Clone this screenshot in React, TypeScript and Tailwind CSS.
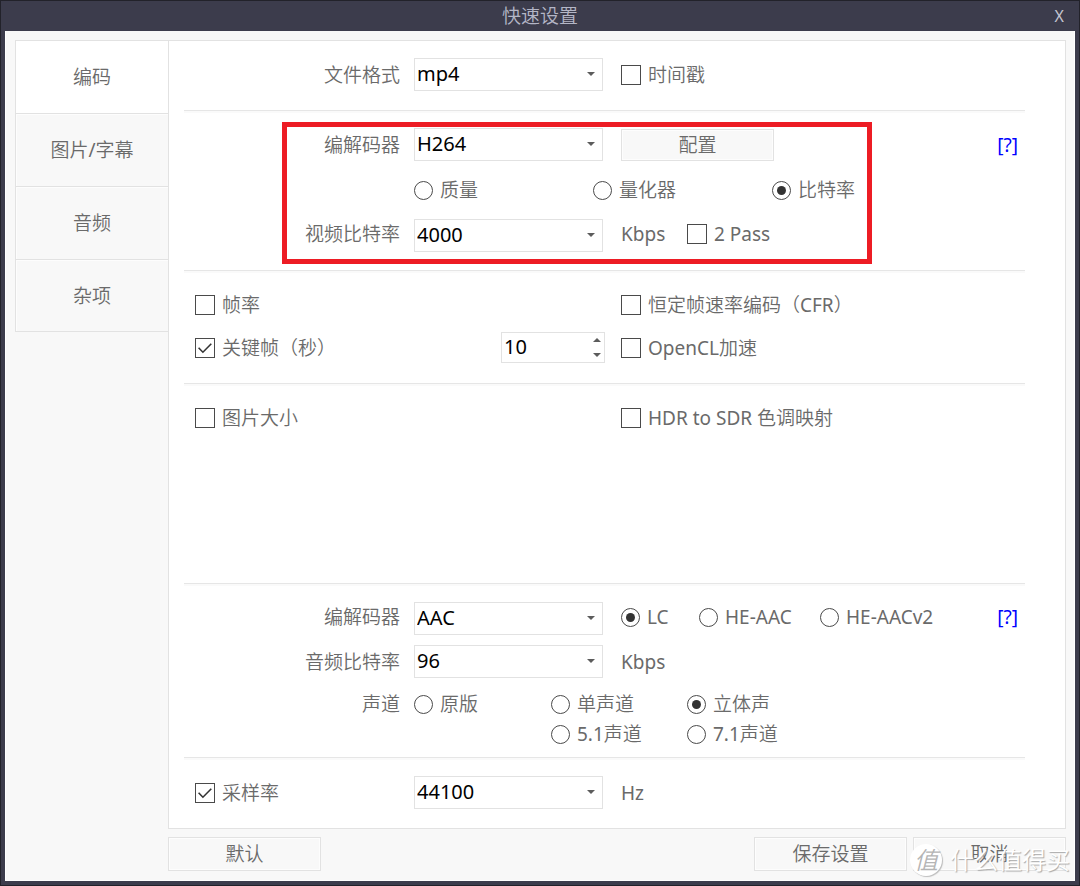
import { useState } from 'react';
import type { ReactNode } from 'react';
import clsx from 'clsx';

const TABS = ['编码', '图片/字幕', '音频', '杂项'];
const VIDEO_MODES = ['质量', '量化器', '比特率'];
const AAC_PROFILES = ['LC', 'HE-AAC', 'HE-AACv2'];

interface SelectBoxProps {
  id: string;
  options: string[];
  label?: string;
}

function SelectBox({ id, options, label }: SelectBoxProps) {
  return (
    <div className="relative w-[189px] shrink-0">
      <select
        id={id}
        aria-label={label}
        className="block h-[33px] w-full appearance-none border border-[#e2e2e2] bg-white pl-[2px] pr-6 pb-[2px] text-xl leading-7 text-black focus:outline-none"
      >
        {options.map((option) => (
          <option key={option}>{option}</option>
        ))}
      </select>
      <svg className="pointer-events-none absolute right-2 top-[14px] h-1 w-2" viewBox="0 0 8 4" fill="#5c5c5c">
        <path d="M0 0h8L4 4z" />
      </svg>
    </div>
  );
}

interface CheckProps {
  label: string;
  defaultChecked?: boolean;
}

function Check({ label, defaultChecked = false }: CheckProps) {
  return (
    <label className="flex items-center gap-[7px] whitespace-nowrap">
      <span className="relative block size-5">
        <input
          type="checkbox"
          defaultChecked={defaultChecked}
          className="peer block size-5 appearance-none border border-[#4a4a4a] bg-white"
        />
        <svg
          className="pointer-events-none absolute inset-0 hidden size-5 peer-checked:block"
          viewBox="0 0 20 20"
          fill="none"
          stroke="#333333"
          strokeWidth="1.6"
        >
          <path d="M3.6 9.8l4.3 4.4 8.4-8.4" />
        </svg>
      </span>
      {label}
    </label>
  );
}

interface RadioProps {
  name: string;
  label: string;
  defaultChecked?: boolean;
  className?: string;
}

function Radio({ name, label, defaultChecked = false, className }: RadioProps) {
  return (
    <label className={clsx('flex items-center gap-[7px] whitespace-nowrap', className)}>
      <span className="relative block size-[19px]">
        <input
          type="radio"
          name={name}
          defaultChecked={defaultChecked}
          className="peer block size-[19px] appearance-none rounded-full border border-[#4a4a4a] bg-white"
        />
        <span className="pointer-events-none absolute inset-[5px] hidden rounded-full bg-[#333333] peer-checked:block" />
      </span>
      {label}
    </label>
  );
}

function FieldLabel({ htmlFor, children }: { htmlFor?: string; children: ReactNode }) {
  return (
    <label htmlFor={htmlFor} className="mr-[14px] w-[216px] shrink-0 text-right">
      {children}
    </label>
  );
}

function HelpLink({ label }: { label: string }) {
  return (
    <a href="#help" aria-label={label} className="ml-auto mr-[7px] text-[#0000ff]">
      [?]
    </a>
  );
}

function Button({ children, className }: { children: ReactNode; className?: string }) {
  return (
    <button
      type="button"
      className={clsx('w-[153px] shrink-0 border border-[#e2e2e2] bg-[#f8f8f8] shadow-[inset_0_0_0_1px_#fdfdfd]', className)}
    >
      {children}
    </button>
  );
}

function Section({ children, className }: { children: ReactNode; className?: string }) {
  return (
    <section className={clsx('relative border-b border-[#e6e6e6] shadow-[0_2px_0_#fafafa]', className)}>
      {children}
    </section>
  );
}

export default function App() {
  const [activeTab, setActiveTab] = useState(TABS[0]);

  return (
    <div className="relative flex min-h-screen flex-col border border-[#22222a] bg-[#3c3c4c] px-[4px] pb-[4px] font-['Noto_Sans','Noto_Sans_CJK_SC_DemiLight','Noto_Sans_CJK_SC',sans-serif] text-[19px] leading-[30px] font-normal text-[#6a6a6a]">
      {/* Title bar */}
      <header className="relative flex h-[30px] items-center justify-center text-[#b4b6c6]">
        <h1>快速设置</h1>
        <button type="button" aria-label="关闭" className="absolute right-[11px] text-base text-[#c4c5d0]">
          X
        </button>
      </header>

      <div className="flex grow flex-col border-x border-b border-white bg-[#f8f8f8] px-2 pt-[9px] pb-[9px]">
        <div className="flex grow pl-px">
          {/* Sidebar */}
          <nav className="w-[153px] shrink-0 self-start border-l border-[#e2e2e2]">
            {TABS.map((tab) => (
              <button
                key={tab}
                type="button"
                onClick={() => setActiveTab(tab)}
                className={clsx(
                  'block h-[73px] w-full border-t border-[#e2e2e2] last:border-b',
                  tab === activeTab ? 'bg-white' : 'bg-[#f8f8f8] shadow-[inset_1px_1px_0_#fdfdfd]',
                )}
              >
                {tab}
              </button>
            ))}
          </nav>

          {/* Settings panel */}
          <main className="grow border border-[#e2e2e2] bg-white pl-[15px] pr-[40px]">
            <Section className="pt-[17px] pb-[19px]">
              <div className="flex items-center">
                <FieldLabel htmlFor="format">文件格式</FieldLabel>
                <SelectBox id="format" options={['mp4', 'mkv']} />
                <div className="ml-[18px]">
                  <Check label="时间戳" />
                </div>
              </div>
            </Section>

            <Section className="pt-[17px] pb-[18px]">
              <div className="flex items-center">
                <FieldLabel htmlFor="video-codec">编解码器</FieldLabel>
                <SelectBox id="video-codec" options={['H264', 'H265']} />
                <Button className="ml-[18px] h-8">配置</Button>
                <HelpLink label="视频帮助" />
              </div>
              <div className="flex h-[58px] items-center pl-[230px]">
                {VIDEO_MODES.map((mode) => (
                  <Radio key={mode} name="video-mode" label={mode} defaultChecked={mode === '比特率'} className="w-[179px]" />
                ))}
              </div>
              <div className="flex items-start">
                <FieldLabel htmlFor="video-bitrate">视频比特率</FieldLabel>
                <SelectBox id="video-bitrate" options={['4000', '6000', '8000']} />
                <span className="ml-[18px] w-[66px]">Kbps</span>
                <Check label="2 Pass" />
              </div>
              {/* Highlight frame around the codec options */}
              <div className="pointer-events-none absolute left-[98px] top-[11px] h-[142px] w-[590px] border-[5px] border-[#ed1c24]" />
            </Section>

            <Section className="pt-[19px] pb-[20px] pl-[11px]">
              <div className="flex items-center">
                <div className="w-[426px]">
                  <Check label="帧率" />
                </div>
                <Check label="恒定帧速率编码（CFR）" />
              </div>
              <div className="mt-[12px] flex items-center">
                <div className="w-[306px]">
                  <Check label="关键帧（秒）" defaultChecked />
                </div>
                <div className="relative mr-[16px] w-[104px]">
                  <input
                    type="text"
                    aria-label="关键帧（秒）"
                    defaultValue="10"
                    className="block h-[31px] w-full border border-[#e2e2e2] bg-white pb-[2px] pl-[2px] text-xl leading-7 text-black focus:outline-none"
                  />
                  <svg className="pointer-events-none absolute right-1 top-[6px] h-[19px] w-2" viewBox="0 0 8 19" fill="#5c5c5c">
                    <path d="M0 4h8L4 0zM0 15h8l-4 4z" />
                  </svg>
                </div>
                <Check label="OpenCL加速" />
              </div>
            </Section>

            <Section className="pt-[19px] pb-[150px] pl-[11px]">
              <div className="flex items-center">
                <div className="w-[426px]">
                  <Check label="图片大小" />
                </div>
                <Check label="HDR to SDR 色调映射" />
              </div>
            </Section>

            <Section className="pt-[18px] pb-[8px]">
              <div className="flex items-start">
                <FieldLabel htmlFor="audio-codec">编解码器</FieldLabel>
                <SelectBox id="audio-codec" options={['AAC', 'MP3']} />
                <div className="ml-[18px] grid grid-cols-[78px_121px_auto]">
                  {AAC_PROFILES.map((profile) => (
                    <Radio key={profile} name="aac-profile" label={profile} defaultChecked={profile === 'LC'} />
                  ))}
                </div>
                <HelpLink label="音频帮助" />
              </div>
              <div className="mt-[10px] flex items-center">
                <FieldLabel htmlFor="audio-bitrate">音频比特率</FieldLabel>
                <SelectBox id="audio-bitrate" options={['96', '128', '192']} />
                <span className="ml-[18px]">Kbps</span>
              </div>
              <div className="mt-[11px] flex" role="radiogroup" aria-label="声道">
                <span className="mr-[14px] w-[216px] text-right">声道</span>
                <div className="grid grid-cols-[137px_136px_auto]">
                  <Radio name="channels" label="原版" />
                  <Radio name="channels" label="单声道" />
                  <Radio name="channels" label="立体声" defaultChecked />
                  <Radio name="channels" label="5.1声道" className="col-start-2" />
                  <Radio name="channels" label="7.1声道" />
                </div>
              </div>
            </Section>

            <div className="flex items-center pt-[18px] pb-[19px] pl-[11px]">
              <div className="w-[219px]">
                <Check label="采样率" defaultChecked />
              </div>
              <SelectBox id="sample-rate" label="采样率" options={['44100', '48000']} />
              <span className="ml-[18px]">Hz</span>
            </div>
          </main>
        </div>

        {/* Footer buttons */}
        <footer className="mt-2 flex gap-[6px] pl-[154px]">
          <Button className="mr-auto h-[34px]">默认</Button>
          <Button className="h-[34px]">保存设置</Button>
          <Button className="h-[34px]">取消</Button>
        </footer>
      </div>

      {/* Site watermark */}
      <div className="pointer-events-none absolute right-[9px] bottom-[9px] flex items-center gap-[8px] text-white">
        <span className="flex size-8 items-center justify-center rounded-full bg-white text-2xl text-[#b5b5b5] italic shadow-[1px_1px_1px_#bdbdbd]">
          值
        </span>
        <span className="text-2xl [text-shadow:1px_1px_1px_#a8a8a8]">什么值得买</span>
      </div>
    </div>
  );
}
